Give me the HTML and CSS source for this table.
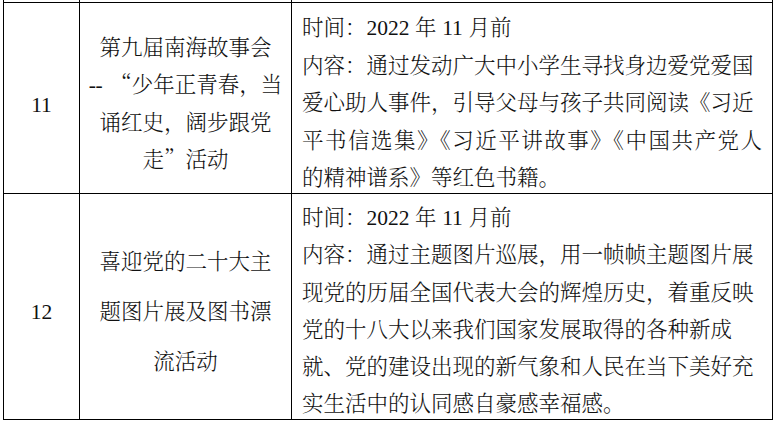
FILE: index.html
```html
<!DOCTYPE html>
<html lang="zh-CN">
<head>
<meta charset="utf-8">
<link rel="stylesheet" href="styles.css">
</head>
<body>
<table class="plan">
  <colgroup>
    <col class="c-no">
    <col class="c-name">
    <col class="c-body">
  </colgroup>
  <tr class="prev"><td></td><td></td><td></td></tr>
  <tr class="r1">
    <td class="no"><div class="ln">11</div></td>
    <td class="name n1">
      <div class="ln">第九届南海故事会</div>
      <div class="ln"><span class="num dash">--</span>“少年正青春，当</div>
      <div class="ln">诵红史，阔步跟党</div>
      <div class="ln">走”活动</div>
    </td>
    <td class="body">
      <div class="ln">时间：<span class="num">2022</span> 年 <span class="num">11</span> 月前</div>
      <div class="ln">内容：通过发动广大中小学生寻找身边爱党爱国</div>
      <div class="ln">爱心助人事件，引导父母与孩子共同阅读《习近</div>
      <div class="ln just">平书信选集》《习近平讲故事》《中国共产党人</div>
      <div class="ln">的精神谱系》等红色书籍。</div>
    </td>
  </tr>
  <tr class="r2">
    <td class="no"><div class="ln">12</div></td>
    <td class="name n2">
      <div class="ln">喜迎党的二十大主</div>
      <div class="ln">题图片展及图书漂</div>
      <div class="ln">流活动</div>
    </td>
    <td class="body">
      <div class="ln">时间：<span class="num">2022</span> 年 <span class="num">11</span> 月前</div>
      <div class="ln">内容：通过主题图片巡展，用一帧帧主题图片展</div>
      <div class="ln">现党的历届全国代表大会的辉煌历史，着重反映</div>
      <div class="ln">党的十八大以来我们国家发展取得的各种新成</div>
      <div class="ln">就、党的建设出现的新气象和人民在当下美好充</div>
      <div class="ln">实生活中的认同感自豪感幸福感。</div>
    </td>
  </tr>
</table>
</body>
</html>
```
FILE: styles.css
```css
html, body {
  margin: 0;
  padding: 0;
  background: #ffffff;
}
body {
  font-family: "Noto Serif CJK SC", "Noto Sans CJK SC", "Liberation Serif", serif;
  font-size: 21.5px;
  font-weight: 300;
  color: #111;
  overflow: hidden;
}
.plan {
  border-collapse: collapse;
  table-layout: fixed;
  margin: -20px 0 0 3px;
  width: 770px;
}
.c-no { width: 76px; }
.c-name { width: 212px; }
.c-body { width: 481px; }
td {
  border: 1px solid #000;
  padding: 0;
  vertical-align: top;
}
.prev td {
  height: 21px;
}
.ln {
  height: 37.4px;
  line-height: 37px;
  white-space: nowrap;
}
.num {
  font-family: "Liberation Serif", serif;
  font-weight: 400;
  line-height: 1;
}
.dash {
  display: inline-block;
  width: 1em;
  text-align: left;
  letter-spacing: -0.5px;
}
.no {
  text-align: center;
  font-family: "Liberation Serif", serif;
  font-weight: 400;
}
.r1 .no { padding-top: 84px; }
.r2 .no { padding-top: 100px; }
.name {
  text-align: center;
}
.n1 { padding-top: 23.5px; }
.n1 .ln { height: 37.5px; }
.n2 { padding-top: 42px; }
.n2 .ln { height: 50px; line-height: 48px; }
.body {
  padding: 3px 10px 0 10px;
}
.r1 .body { padding-top: 4px; }
.r1 .body .ln { height: 37.5px; }
.r1 .body .ln:last-child { margin-bottom: -1.5px; }
.r2 .body .ln { height: 37.3px; }
.r2 .body .ln:last-child { margin-bottom: -1.8px; }
.just {
  text-align: justify;
  text-align-last: justify;
}
```
